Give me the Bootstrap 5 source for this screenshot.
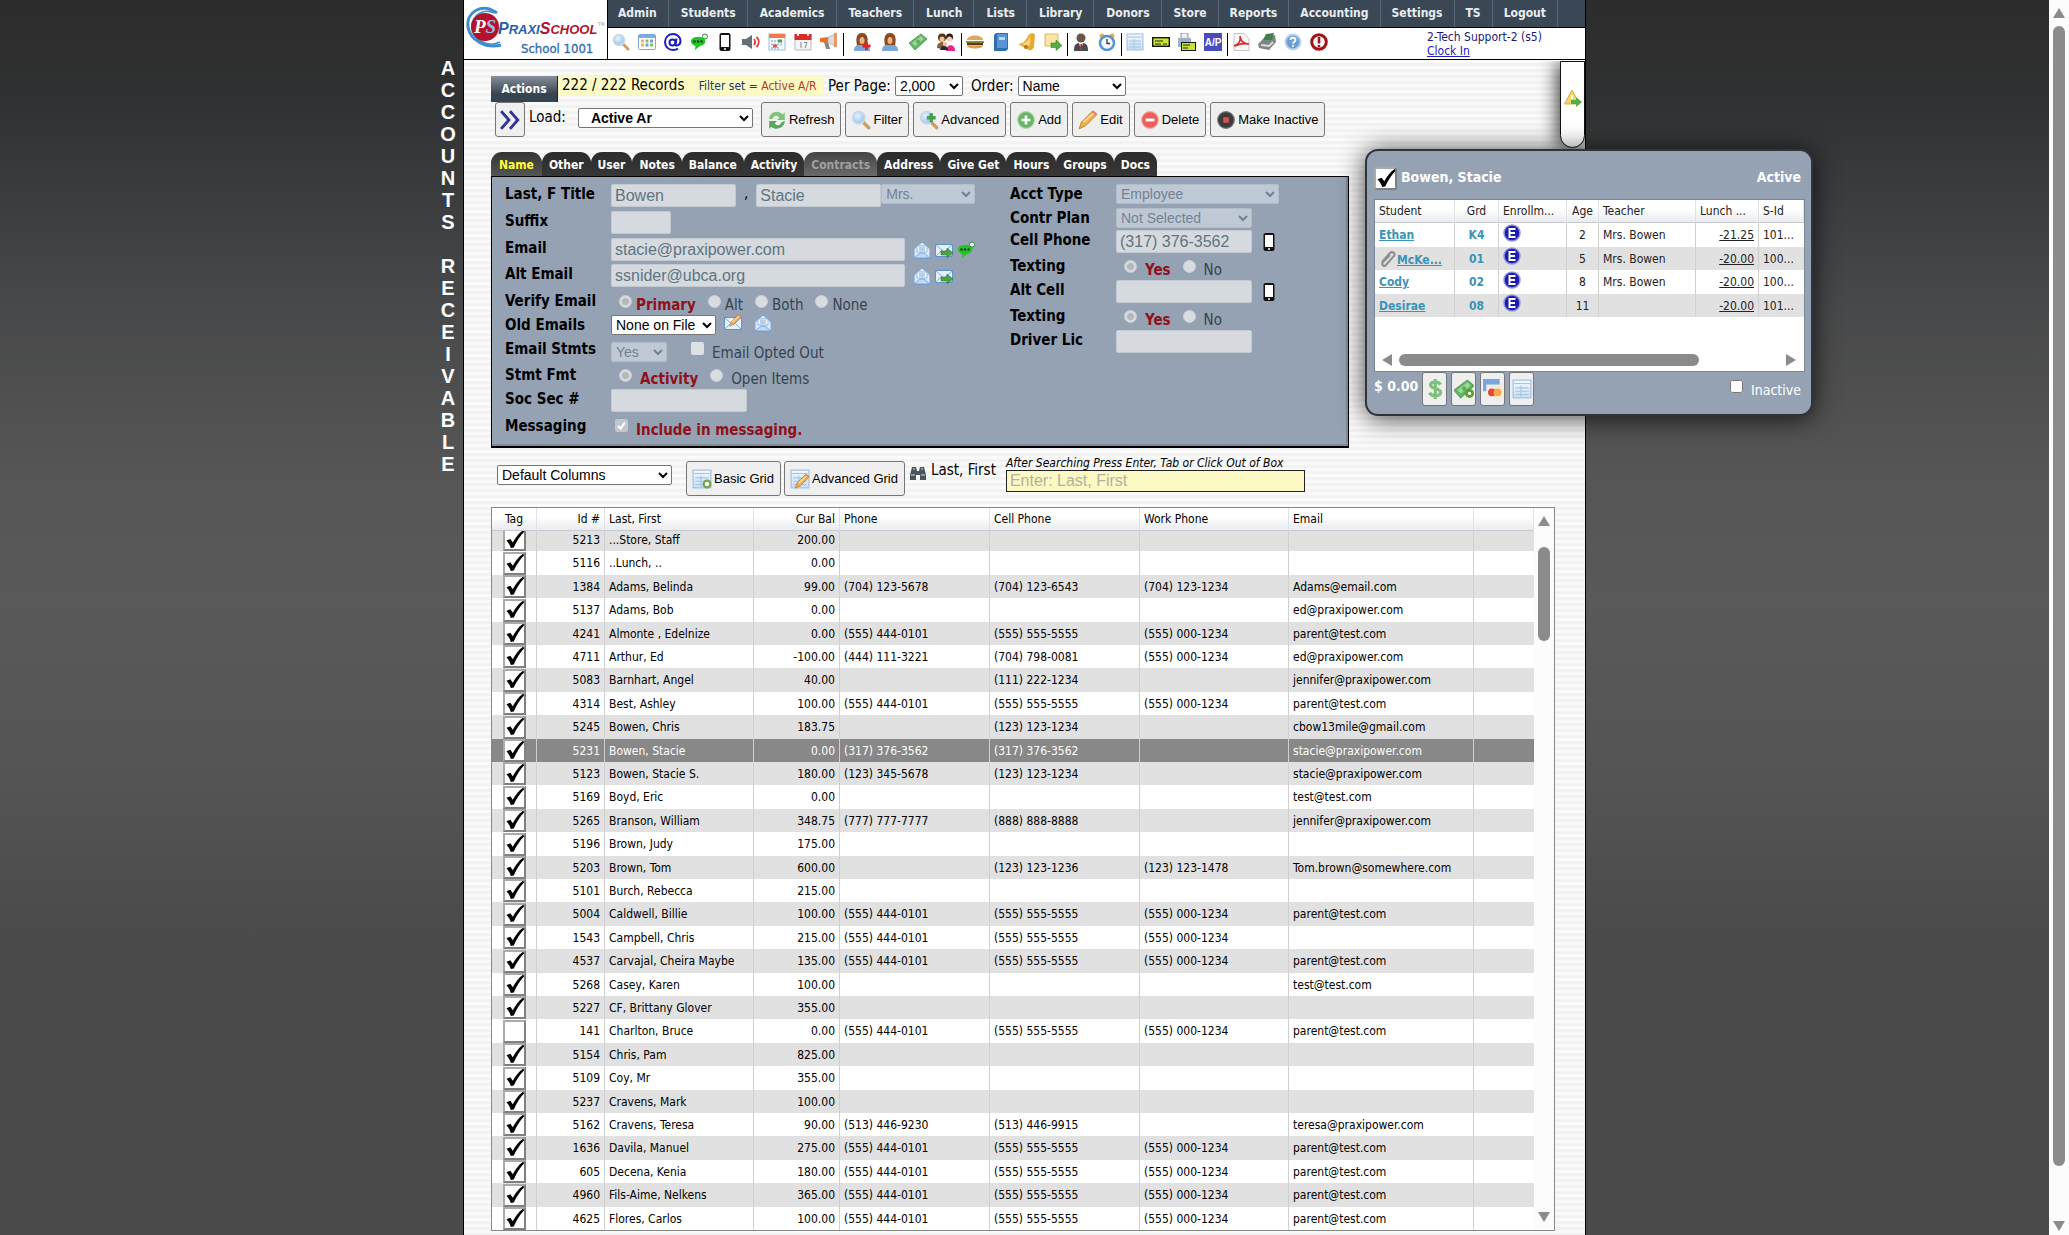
<!DOCTYPE html>
<html lang="en">
<head>
<meta charset="utf-8">
<meta name="viewport" content="width=device-width, initial-scale=1">
<title>PraxiSchool - Accounts Receivable</title>
<link href="https://cdn.jsdelivr.net/npm/bootstrap@5.3.0/dist/css/bootstrap.min.css" rel="stylesheet">
<style>
body{font-family:"DejaVu Sans Condensed","DejaVu Sans",sans-serif;font-size:15px;line-height:20px;color:#000;background:linear-gradient(#2c2c2c 0,#303132 100px,#474849 300px,#565656 480px,#595959 600px,#555 760px,#4b4b4b 930px,#4b4b4b 100%);}
.scene{display:grid;grid-template-columns:minmax(0,1fr) minmax(0,1123px) minmax(0,1fr)}
.side-title{font:bold 20px/22px "Liberation Sans",Arial,sans-serif;color:#fff;white-space:pre;text-align:center;padding:57px 6px 0 0;width:24px;margin-left:auto}
.sheet{border:solid #000;border-width:0 1px;background:#fff repeating-linear-gradient(#fafafa 0,#fafafa 3px,#f2f2f2 3px,#f2f2f2 6px);padding-bottom:1px}
.topbar{border-bottom:1px solid #000;background:#fff}
.brand{width:144px;border-right:1px solid #000;height:59px}
.menu{background:#3a4856;border-bottom:1px solid #000;height:28px}
.menu a{color:#e9edf0;font-weight:bold;font-size:12px;line-height:27px;padding:0 11px 0 12px;border-right:1px solid #5b6875;text-decoration:none}
.menu a:nth-child(n+10){padding-left:11px}
.menu a:first-child{padding-left:10px}
.tools{padding:5px 0 0}
.ic{width:18px;height:18px;flex:none;display:block}
.tools .ic{margin:0 4px}
.tools .wide .ic{margin:0 5px}
.tools .bar{width:1px;height:23px;background:#000;margin-left:1px}
.who{font-size:12px;line-height:14px;color:#1a1a78;width:158px;padding-top:2px}
.who a{color:#2020b8}
.work{padding:16px 0 0 27px}
.actions{width:67px;height:26px;border:0;border-right:1px solid #222;background:linear-gradient(#87909a,#36444f 70%);color:#fff;font-weight:bold;font-size:12px;padding:0}
.strip{background:#fbfac5;height:19px;width:266px;padding-left:4px;line-height:19px}
.strip small{font-size:12px;color:#203a5c;margin-left:10px}
.strip b{font-weight:400;color:#b0401c}
select.pick{font:14px "Liberation Sans",Arial,sans-serif;height:20px;border:1px solid #767676;border-radius:2px;background:#fff;color:#000;padding:0}
select.pick:disabled{background:#bfc9d5;border-color:#b2bdca;color:#728191;opacity:1}
.fl select.pick{margin-top:1px}
select.pick.filterset{margin:6px 8px 0 4px;padding-left:8px;font-weight:bold}
.push{font:13px/16px "Liberation Sans",Arial,sans-serif;color:#000;background:#efefef;border:1px solid #767676;border-radius:3px;height:35px;padding:0 6px 0 5px;display:flex;align-items:center;gap:2px}
.push .ic{width:20px;height:20px}
.tabs{height:24px;margin-top:15px}
.tabs a{background:linear-gradient(#2c2c2c,#373737);border-radius:11px 11px 0 0;color:#fff;font-weight:bold;font-size:12px;line-height:27px;height:24px;padding:0 7px;text-decoration:none}
.tabs a.on{color:#ff3;background:linear-gradient(#333,#555);padding:0 8px}
.tabs a.off{color:#a0a0a0;background:linear-gradient(#444,#6a6a6a)}
.panel{border:1px solid #000;box-shadow:inset -2px -2px 0 #7d8b9b;border-bottom-width:2px;background:#94a2b4;width:858px;max-width:100%;height:272px;padding:6px 0 0 13px}
.fl{display:flex;align-items:flex-start}
.r22{height:22px}.r24{height:24px}.r26{height:26px}.r27{height:27px}
.fl>.cap{width:106px;flex:none;font-weight:bold;line-height:22px;white-space:nowrap}
.lead-col{width:505px;flex:none}
.fld{font:16px/20px "Liberation Sans",Arial,sans-serif;background:#d6dade;color:#5d7481;border:1px solid #c3cad2;border-radius:2px;height:23px;padding:0 3px;margin-top:1px;opacity:1}
.w56{width:56px}.w60{width:60px}.w68{width:68px}.w94{width:94px}.w105{width:105px}.w108{width:108px}.w125{width:125px}.w136{width:136px}.w163{width:163px}.w175{width:175px}.w294{width:294px}
.dot{appearance:none;width:13px;height:13px;border-radius:50%;background:#d9dce0;border:1px solid #ccd2d8;margin:5px 0 0;flex:none}
.dot:checked{background:radial-gradient(circle,#b4b8bc 0,#b4b8bc 3px,#d6d9dd 4px)}
.tick{appearance:none;width:13px;height:13px;border-radius:2px;background:#dde0e4;margin:2px 0 0;flex:none}
.tick:checked{background:#c3c6ca url("data:image/svg+xml,%3Csvg xmlns='http://www.w3.org/2000/svg' viewBox='0 0 13 13'%3E%3Cpath d='M3 7l2.500 2.500L10 3.500' fill='none' stroke='%23fff' stroke-width='2'/%3E%3C/svg%3E")}
.opt{line-height:22px;margin-top:4px;color:#38424d}
.hot{color:#8f1119;font-weight:bold}
.finder{padding-top:8px}
.finder .w175{margin:9px 14px 0 6px}
.finder .pair{margin-top:5px;gap:3px}
.finder .look{padding-left:2px}
.search{background:#fdf9c4;border:1px solid #222;height:22px;width:299px;font:16px "Liberation Sans",Arial,sans-serif;padding:0 3px}
.search::placeholder{color:#b3b19a;opacity:1}
.hint{font-size:12px;font-style:italic;line-height:14px}
.listing{border:1px solid #888;background:#fff;margin-right:30px;margin-top:11px}
.gridtab{font-size:12px;line-height:16px;table-layout:fixed;width:100%;border-collapse:separate;border-spacing:0}
.gridtab th{font-weight:400;height:23px;padding:0 4px;background:linear-gradient(#fff 40%,#e9ebef);border-right:1px solid #e0e2e6;border-bottom:1px solid #c8cacf;white-space:nowrap;overflow:hidden;text-overflow:clip}
.gridtab td{height:23px;padding:0 4px;border-right:1px solid #d0d0d0;white-space:nowrap;overflow:hidden}
.gridtab td:last-child{border-right:0}
.gridtab tbody tr:nth-child(odd){background:#e1e1e1}
.roster tbody tr:nth-child(5n+2) td,.roster tbody tr:nth-child(5n+4) td{height:24px}
.roster tbody tr:first-child td{height:20px;line-height:14px;padding-bottom:3px}
.roster tbody tr:first-child .chk{height:20px;border-top:0;background-position:center -1px}
.roster tbody tr.sel{background:#888;color:#fff}
.chk{appearance:none;display:block;width:23px;height:23px;margin:0 auto;border:2px solid #aaa;border-right-color:#808080;border-bottom-color:#808080;background:#fff}
.chk:checked{background:#fff url("data:image/svg+xml,%3Csvg xmlns='http://www.w3.org/2000/svg' viewBox='0 0 20 20'%3E%3Cpath d='M2 10.500l4-1.500 2.500 3.500C11 8 14.500 3 19.500 0L20 2c-4 4-7.500 9-10.500 15.500L6.500 18C5.500 15 4 12.500 2 10.500z'/%3E%3C/svg%3E") center/20px 20px no-repeat border-box}
.vbar{width:20px;flex:none;background:#fcfcfc;display:flex;flex-direction:column;align-items:center}
.vbar i{display:block;width:12px;background:#8b8b8b;border-radius:6px}
.vbar .thumb{height:94px;margin-top:21px}
.vbar .down.far{margin:55px 0 4px}
.up,.down,.lt,.rt{width:0;height:0;border:solid transparent}
.up{border-width:0 6px 10px;border-bottom-color:#8b8b8b}
.down{border-width:10px 6px 0;border-top-color:#8b8b8b}
.lt{border-width:6px 10px 6px 0;border-right-color:#8b8b8b}
.rt{border-width:6px 0 6px 10px;border-left-color:#8b8b8b}
.pull{position:absolute;right:0;top:61px;width:25px;height:87px;background:#fff;border:1px solid #111;border-radius:0 0 13px 13px;box-shadow:-3px 2px 18px rgba(0,0,0,.75);display:flex;align-items:center;justify-content:center;padding-bottom:14px;clip-path:inset(0 0 -20px -40px)}
.float-card{position:absolute;left:901px;top:149px;width:448px;height:267px;background:#94a2b4;border:2px solid #2f343a;border-radius:13px;box-shadow:0 2px 26px rgba(0,0,0,.75);padding:16px 6px 0 7px;font-size:14px;color:#fff}
.float-card .head{height:32px}
.kids{background:#fff;border:1px solid #7a8896;color:#222;height:173px}
.kids .gridtab{width:429px}
.kids .gridtab tbody tr:nth-child(odd){background:#fff}
.kids .gridtab tbody tr:nth-child(even){background:#e1e1e1}
.kids .gridtab th{height:23px}
.kids .gridtab td{height:24px;text-overflow:ellipsis}
.kids .gridtab tbody tr:nth-child(even) td{height:23px}
.kids td a{color:#3a93b8;font-weight:bold}
.kids .gr{color:#3a93b8;font-weight:bold}
.kids .gridtab td a.bal{color:#222;font-weight:400}
.kids .gridtab .ic{width:18px;height:18px;margin-top:-5px}
.foot .push{width:25px;height:34px;padding:0;justify-content:center;margin-right:4px}
.hbar{display:flex;align-items:center;height:22px;padding:0 8px 0 7px}
.hbar i{height:12px;width:300px;border-radius:6px;background:#8b8b8b;margin-left:7px}
</style>
</head>
<body>
<svg width="0" height="0" class="position-absolute" aria-hidden="true"><defs>
<radialGradient id="gb" cx=".4" cy=".35"><stop offset="0" stop-color="#e4f3fe"/><stop offset="1" stop-color="#a9cff0"/></radialGradient>
<linearGradient id="pg" x2="0" y2="1"><stop offset="0" stop-color="#f2f8fe"/><stop offset="1" stop-color="#c9dff4"/></linearGradient>
<symbol id="mag" viewBox="0 0 18 18"><path d="M11 11l5 5" stroke="#d19b66" stroke-width="3" stroke-linecap="round"/><circle cx="7" cy="7" r="5.500" fill="url(#gb)" stroke="#c9d8e6" stroke-width="1.500"/></symbol>
<symbol id="magadd" viewBox="0 0 18 18"><use href="#mag"/><path d="M11 3v8M7 7h8" stroke="#45a04e" stroke-width="3"/></symbol>
<symbol id="appw" viewBox="0 0 18 18"><rect x=".5" y="1.500" width="17" height="15" rx="1" fill="#fff" stroke="#7ba8d6"/><path d="M1 3.500h16" stroke="#79aee4" stroke-width="3"/><path d="M3 8h3M3 12h3" stroke="#ecb561" stroke-width="3"/><path d="M7.500 8h3M12 12h3" stroke="#7fc067" stroke-width="3"/><path d="M12 8h3M7.500 12h3" stroke="#6b9fd8" stroke-width="3"/></symbol>
<symbol id="at" viewBox="0 0 18 18"><g fill="none" stroke="#1c1cc4" stroke-width="2"><circle cx="8.500" cy="9.500" r="3"/><path d="M12.500 5.500l-1 6c.3 2 5 1 5-3.500C16.500 4 13 1 9 1S1 4 1 9s4 8 8 8c2 0 4-.5 5-1.500"/></g></symbol>
<symbol id="chat" viewBox="0 0 18 18"><path d="M8 4c9-1 10 8 2 9l-5 4 .5-4C-1 11-1 4 8 4z" fill="#22c522"/><circle cx="15" cy="3.500" r="2.500" fill="#dfe" stroke="#3a8a3a"/><path d="M3.500 8.500h2M7 8.500h2M10.500 8.500h2" stroke="#123" stroke-width="2"/></symbol>
<symbol id="cell" viewBox="0 0 18 18"><rect x="3.500" width="11" height="18" rx="2" fill="#111"/><rect x="5" y="2" width="8" height="12" fill="#fff"/><circle cx="9" cy="16" r="1" fill="#fff"/></symbol>
<symbol id="spk" viewBox="0 0 18 18"><path d="M0 6h4l6-4v14l-6-4H0z" fill="#666f78"/><path d="M12 6c1.500 2 1.500 4 0 6M14.500 4c3 3 3 7 0 10" stroke="#e0393e" stroke-width="1.800" fill="none"/></symbol>
<symbol id="cal" viewBox="0 0 18 18"><rect x="1" y="1" width="16" height="16" fill="#f6fafe" stroke="#9dbcdc"/><path d="M1 3h16" stroke="#ef7a4e" stroke-width="4"/><path d="M3 8h12M3 11.500h12M3 15h9" stroke="#aac6e2" stroke-width="2" stroke-dasharray="2 1"/><path d="M10 8h4" stroke="#4aa33e" stroke-width="3"/><path d="M5 13h4" stroke="#e05545" stroke-width="3"/></symbol>
<symbol id="redcal" viewBox="0 0 18 18"><path d="M1 2h16v15H1z" fill="#f4f4f4" stroke="#bbb"/><path d="M.5 1h17v6H.5z" fill="#d92b2b"/><path d="M4 0v3M14 0v3" stroke="#eee" stroke-width="2"/><path d="M7 9v6M10 9.500h3l-2 5.500" stroke="#888" fill="none"/></symbol>
<symbol id="mega" viewBox="0 0 18 18"><path d="M4 9l4-1 2 8H6z" fill="#888"/><path d="M0 5l8-1v6l-8-1z" fill="#e8702a"/><path d="M8 4l7-3v12l-7-3z" fill="#d9dde0" stroke="#9a9a9a" stroke-width=".5"/><path d="M14 0h3v14h-3z" fill="#e79a6c"/></symbol>
<symbol id="woman" viewBox="0 0 18 18"><path d="M1 18c0-6 4-7 8-7s8 1 8 7z" fill="#7ba6da"/><path d="M4 12C2 3 5 0 9 0s7 3 5 12z" fill="#8d4a22"/><ellipse cx="9" cy="7.500" rx="2.500" ry="3.500" fill="#e8b588"/></symbol>
<symbol id="womanadd" viewBox="0 0 18 18"><use href="#woman"/><path d="M13.500 9v8M9.500 13h8" stroke="#e2231f" stroke-width="2.800"/></symbol>
<symbol id="cash" viewBox="0 0 18 18"><path d="M0 10L12 1l6 5L6 17z" fill="#63b462" stroke="#5aa45e"/><path d="M3 10l9-7 3 3-9 7z" fill="#9cd79a"/><circle cx="9" cy="8.500" r="2" fill="#5cad60"/></symbol>
<symbol id="people" viewBox="0 0 18 18"><circle cx="5" cy="4.500" r="4" fill="#523318"/><circle cx="12.500" cy="4" r="3.500" fill="#2c1a10"/><path d="M0 15c0-5 3-6 6-6l4 8z" fill="#8b5d3a"/><path d="M9 18c0-7 9-8 9 0z" fill="#e0288c"/><circle cx="5" cy="6" r="2.500" fill="#f2c49a"/><circle cx="12.500" cy="6" r="2.500" fill="#f6d0ad"/><path d="M3 17c1-5 7-6 8 0z" fill="#2a2a2a"/><circle cx="8" cy="11" r="2.200" fill="#efc09a"/></symbol>
<symbol id="burger" viewBox="0 0 18 18"><path d="M1 7c0-6 16-6 16 0z" fill="#e0a85a"/><path d="M0 9h18" stroke="#7f9a3c" stroke-width="2"/><path d="M1 11h16" stroke="#6a3518" stroke-width="2.500"/><path d="M1 12.500h16c0 4-16 4-16 0z" fill="#dc9f4c"/></symbol>
<symbol id="book" viewBox="0 0 18 18"><path d="M2 2l2-2h12v16l-2 2H2z" fill="#2f6fae"/><path d="M5 1h10v14H5z" fill="#5a97d2"/><path d="M7 4h6v3H7z" fill="#b9d6f0"/></symbol>
<symbol id="bell" viewBox="0 0 18 18"><path d="M15 0l2 2-1 11c0 3-3 5-5 4L0 11c4 0 8-3 10-8 1-2 3-3 5-3z" fill="#e8a92c"/><path d="M12 3c-1 4-5 7-8 8l6 3c2-2 3-6 2-11z" fill="#f8d678"/><circle cx="8" cy="14" r="2" fill="#b87416"/></symbol>
<symbol id="note" viewBox="0 0 18 18"><path d="M1 1h13v12H1z" fill="#fbe5a4" stroke="#e2b765"/><path d="M7 10h5V7l6 5.500-6 5V14.500H7z" fill="#4fae3f" stroke="#338a2b" stroke-width=".6"/></symbol>
<symbol id="suit" viewBox="0 0 18 18"><path d="M2 18c0-7 2-8 7-8s7 1 7 8z" fill="#454b52"/><circle cx="9" cy="5" r="4.500" fill="#6a5548"/><path d="M7 10h4l-2 7z" fill="#fff"/><path d="M8.500 11h1.500l.5 4-1.500 2-1-2z" fill="#cc2027"/></symbol>
<symbol id="clock" viewBox="0 0 18 18"><circle cx="4" cy="3" r="2.500" fill="#e8b04a"/><circle cx="14" cy="3" r="2.500" fill="#e8b04a"/><circle cx="9" cy="10" r="7" fill="#f4f9ff" stroke="#5193d2" stroke-width="2.500"/><path d="M9 6v4.500h3" stroke="#333" fill="none" stroke-width="1.300"/></symbol>
<symbol id="sheet" viewBox="0 0 18 18"><rect x="1" y="1" width="16" height="16" fill="url(#pg)" stroke="#9cbfe2"/><path d="M2 4h14M3 8h12M3 11h12M3 14h12M8 6v10" stroke="#a5c5e5" stroke-width="1"/></symbol>
<symbol id="sheetadd" viewBox="0 0 18 18"><use href="#sheet"/><circle cx="13.500" cy="13.500" r="3" fill="#fff" stroke="#6fa54b" stroke-width="2"/></symbol>
<symbol id="pencil" viewBox="0 0 18 18"><path d="M1 17l2-6L13 1l4 3L7 14z" fill="#f2b04c" stroke="#b97a28" stroke-width=".8"/><path d="M12 2l2-1.500 3.500 3L16 5z" fill="#e4836f"/><path d="M5 11l9-8" stroke="#fbdc96" stroke-width="1.500"/></symbol>
<symbol id="sheetedit" viewBox="0 0 18 18"><use href="#sheet"/><use href="#pencil" x="4" y="4" width="14" height="14"/></symbol>
<symbol id="cheque" viewBox="0 0 18 18"><rect x=".7" y="4.700" width="16.600" height="8.600" fill="#c5e733" stroke="#151515" stroke-width="1.400"/><path d="M3 8h8M3 11h6M11 11h4" stroke="#222"/></symbol>
<symbol id="chequep" viewBox="0 0 18 18"><path d="M3 0h7v6H3z" fill="#e8eef4" stroke="#8b98a6"/><path d="M0 5h13v9H0z" fill="#9fb2c4"/><rect x="3.500" y="9.500" width="14" height="8" fill="#c5e733" stroke="#151515"/><path d="M5 12h7M5 15h5" stroke="#222"/></symbol>
<symbol id="apx" viewBox="0 0 18 18"><rect width="18" height="18" fill="#4b4bc0"/><text x="9" y="13" text-anchor="middle" font-size="10" font-weight="bold" fill="#fff" font-family="Liberation Sans,sans-serif">A/P</text></symbol>
<symbol id="pdf" viewBox="0 0 18 18"><path d="M2 .5h10l5 5v12H2z" fill="#f8f8f8" stroke="#c4c4c4"/><path d="M2 13c5-2 7-6 6-10M8 4c1 4 4 7 9 7M3 13c4-2 8-3 13-2" stroke="#d8282c" stroke-width="1.600" fill="none"/></symbol>
<symbol id="prn" viewBox="0 0 18 18"><path d="M0 11l6-6 11-3 1 7-7 8-10-2z" fill="#7d8580"/><path d="M5 7l3-6 8-1-2 7z" fill="#3f7f50"/><path d="M3 12l8 1 4-4" stroke="#dadfdc" stroke-width="1.800" fill="none"/></symbol>
<symbol id="help" viewBox="0 0 18 18"><circle cx="9" cy="9" r="7.500" fill="#6b9fd6" stroke="#bcd3ea" stroke-width="2"/><path d="M6.500 7c0-3 5-3 5 0 0 2-2.500 2-2.500 3.500M9 12v1.800" stroke="#fff" stroke-width="1.800" fill="none"/></symbol>
<symbol id="stop" viewBox="0 0 18 18"><circle cx="9" cy="9" r="7.300" fill="#fff" stroke="#a31216" stroke-width="3"/><path d="M9 4v6.500M9 12v2.200" stroke="#a31216" stroke-width="2.600"/></symbol>
<symbol id="warn" viewBox="0 0 18 18"><path d="M8 1l7.500 14H.5z" fill="#f8d458" stroke="#c9b064"/><path d="M8 6v4" stroke="#fff" stroke-width="2"/><path d="M7 11h5V8l6 5-6 5v-3H7z" fill="#55ad43"/></symbol>
<symbol id="chev" viewBox="0 0 18 18"><path d="M1 1l7 8-7 8M9 1l7 8-7 8" fill="none" stroke="#33339c" stroke-width="2.600"/></symbol>
<symbol id="refr" viewBox="0 0 18 18"><path d="M2 8c0-6 8-9 12-4l2-2v7H9l2-2c-2-3-5-2-6 1z" fill="#7cc476"/><path d="M16 10c0 6-8 9-12 5l-2 2v-7h7l-2 2c2 3 5 2 6-1z" fill="#5aa75b"/></symbol>
<symbol id="plus" viewBox="0 0 18 18"><circle cx="9" cy="9" r="7.500" fill="#67b565" stroke="#a8d6a4"/><path d="M9 5v8M5 9h8" stroke="#fff" stroke-width="2.400"/></symbol>
<symbol id="minus" viewBox="0 0 18 18"><circle cx="9" cy="9" r="7.500" fill="#ea5f5c" stroke="#f3a09c"/><path d="M5 9h8" stroke="#fff" stroke-width="2.600"/></symbol>
<symbol id="blk" viewBox="0 0 18 18"><circle cx="9" cy="9" r="7.500" fill="#3c3c3e" stroke="#77787a"/><path d="M6.500 6.500h5v5h-5z" fill="#e05050"/></symbol>
<symbol id="mailo" viewBox="0 0 18 18"><path d="M1 8l8-7 8 7v9H1z" fill="#dcebfb" stroke="#7aa6da"/><path d="M4 5h10v6H4z" fill="#fff" stroke="#8db5e2"/><path d="M6 7h6M6 9h6" stroke="#6fa0da"/><path d="M1 17l6-5h4l6 5z" fill="#bcd9f6" stroke="#5d93d0" stroke-width=".7"/></symbol>
<symbol id="mail" viewBox="0 0 18 18"><path d="M.5 3.500h17v12H.5z" fill="#e6f1fd" stroke="#5d93d0"/><path d="M1 4l8 7 8-7M1 15l6-6M17 15l-6-6" fill="none" stroke="#7fadde"/></symbol>
<symbol id="mails" viewBox="0 0 18 18"><use href="#mail"/><path d="M6 10h6V7l6 5-6 5v-3H6z" fill="#4fa33e" stroke="#2f7d28" stroke-width=".6"/></symbol>
<symbol id="maile" viewBox="0 0 18 18"><use href="#mail"/><use href="#pencil" x="5" width="13" height="13"/></symbol>
<symbol id="bino" viewBox="0 0 18 18"><path d="M3 3h4l1 4h2l1-4h4l2 8v5h-6v-5H7v5H1v-5z" fill="#4b535c"/><path d="M2 11h4M12 11h4M4 5h2M12 5h2" stroke="#a5b0bb" stroke-width="1.500"/></symbol>
<symbol id="enr" viewBox="0 0 18 18"><circle cx="9" cy="9" r="8" fill="#1c1cb0" stroke="#8f93d8" stroke-width="1.500"/><path d="M12.500 5H6.500v8h6M7 9h5" stroke="#fff" stroke-width="2" fill="none"/></symbol>
<symbol id="clip" viewBox="0 0 18 18"><path d="M3 12L11 3c2-2 6 0 4 3l-8 9c-2 2-5 0-3-3l7-7" fill="none" stroke="#8c8c8c" stroke-width="2"/></symbol>
<symbol id="dol" viewBox="0 0 18 18"><path d="M14 5c-2-3-9-3-9 .5 0 4 9 2 9 6.500 0 4-8 4-10 .5M9.300 0v18" stroke="#7cc07c" stroke-width="2.800" fill="none"/></symbol>
<symbol id="cashadd" viewBox="0 0 18 18"><use href="#cash"/><circle cx="14" cy="13" r="4" fill="#57a02d"/><circle cx="14" cy="13" r="1.500" fill="#fff"/></symbol>
<symbol id="cards" viewBox="0 0 18 18"><path d="M0 0h15v11H0z" fill="#7ba5e2"/><path d="M3 5h15v12H3z" fill="#f4ecd9"/><circle cx="8" cy="12" r="3.500" fill="#e3453f"/><circle cx="13" cy="12" r="3.500" fill="#f5ab46"/></symbol>
</defs></svg>

<div class="d-flex min-vh-100">
<div class="scene flex-grow-1 overflow-hidden">
<aside><div class="side-title">A
C
C
O
U
N
T
S

R
E
C
E
I
V
A
B
L
E</div></aside>
<main class="sheet position-relative">
  <header class="topbar d-flex">
    <div class="brand flex-shrink-0">
      <svg width="142" height="59" viewBox="0 0 142 59" role="img" aria-label="PraxiSchool School 1001">
        <g fill="none" stroke="#3f8fd0"><path d="M33 13C18 2 2 12 4 27c2 13 18 22 33 18" stroke-width="3"/><path d="M36 42C24 48 8 40 8 26 8 15 20 8 30 13" stroke-width="1.500"/></g>
        <circle cx="21" cy="27" r="14" fill="#b3122c"/>
        <text x="10" y="33" font-family="Liberation Serif,serif" font-weight="bold" font-style="italic" font-size="19" fill="#fff">P<tspan fill="#9fb9ea">S</tspan></text>
        <text x="34" y="34" font-family="Liberation Sans,sans-serif" font-weight="bold" font-style="italic" font-size="16" fill="#1f5fae">P<tspan font-size="13">RAXI</tspan><tspan fill="#b3122c">S</tspan><tspan fill="#b3122c" font-size="13">CHOOL</tspan></text>
        <text x="134" y="26" font-size="5" fill="#999">TM</text>
        <text x="57" y="53" font-family="DejaVu Sans Condensed,sans-serif" font-size="13" fill="#2f6cab" stroke="#2f6cab" stroke-width=".3">School 1001</text>
      </svg>
    </div>
    <div class="flex-grow-1">
      <nav class="menu d-flex"><a href="#">Admin</a><a href="#">Students</a><a href="#">Academics</a><a href="#">Teachers</a><a href="#">Lunch</a><a href="#">Lists</a><a href="#">Library</a><a href="#">Donors</a><a href="#">Store</a><a href="#">Reports</a><a href="#">Accounting</a><a href="#">Settings</a><a href="#">TS</a><a href="#">Logout</a></nav>
      <div class="d-flex justify-content-between">
        <div class="tools d-flex">
          <svg class="ic"><use href="#mag"/></svg><svg class="ic"><use href="#appw"/></svg><svg class="ic"><use href="#at"/></svg><svg class="ic"><use href="#chat"/></svg><svg class="ic"><use href="#cell"/></svg><svg class="ic"><use href="#spk"/></svg><svg class="ic"><use href="#cal"/></svg><svg class="ic"><use href="#redcal"/></svg><svg class="ic"><use href="#mega"/></svg>
          <span class="bar"></span>
          <span class="wide d-flex ms-1"><svg class="ic"><use href="#womanadd"/></svg><svg class="ic"><use href="#woman"/></svg><svg class="ic"><use href="#cash"/></svg><svg class="ic"><use href="#people"/></svg></span>
          <span class="bar"></span>
          <svg class="ic"><use href="#burger"/></svg><svg class="ic"><use href="#book"/></svg><svg class="ic"><use href="#bell"/></svg><svg class="ic"><use href="#note"/></svg>
          <span class="bar"></span>
          <svg class="ic"><use href="#suit"/></svg><svg class="ic"><use href="#clock"/></svg>
          <span class="bar"></span>
          <svg class="ic"><use href="#sheet"/></svg><svg class="ic"><use href="#cheque"/></svg><svg class="ic"><use href="#chequep"/></svg><svg class="ic"><use href="#apx"/></svg>
          <span class="bar"></span>
          <svg class="ic"><use href="#pdf"/></svg><svg class="ic"><use href="#prn"/></svg><svg class="ic"><use href="#help"/></svg><svg class="ic"><use href="#stop"/></svg>
        </div>
        <div class="who">2-Tech Support-2 (s5)<br><a href="#">Clock In</a></div>
      </div>
    </div>
  </header>

  <div class="work">
    <div class="d-flex align-items-start">
      <button class="actions" type="button">Actions</button>
      <div class="strip text-nowrap">222 / 222 Records <small>Filter set = <b>Active A/R</b></small></div>
      <label for="pp" class="ms-1 me-1">Per Page:</label><select id="pp" class="pick w68"><option>2,000</option></select>
      <label for="ord" class="ms-2 me-1">Order:</label><select id="ord" class="pick w108"><option>Name</option></select>
    </div>
    <div class="d-flex align-items-start">
      <button class="push ms-1 me-1 px-1" type="button" aria-label="Expand"><svg class="ic"><use href="#chev"/></svg></button>
      <label for="ld" class="mt-1 me-2 lh-1 pt-1">Load:</label><select id="ld" class="pick w175 filterset"><option>Active Ar</option></select>
      <div class="d-flex gap-1">
        <button class="push" type="button"><svg class="ic"><use href="#refr"/></svg>Refresh</button>
        <button class="push" type="button"><svg class="ic"><use href="#mag"/></svg>Filter</button>
        <button class="push" type="button"><svg class="ic"><use href="#magadd"/></svg>Advanced</button>
        <button class="push" type="button"><svg class="ic"><use href="#plus"/></svg>Add</button>
        <button class="push" type="button"><svg class="ic"><use href="#pencil"/></svg>Edit</button>
        <button class="push" type="button"><svg class="ic"><use href="#minus"/></svg>Delete</button>
        <button class="push" type="button"><svg class="ic"><use href="#blk"/></svg>Make Inactive</button>
      </div>
    </div>
    <nav class="tabs d-flex"><a href="#" class="on">Name</a><a href="#">Other</a><a href="#">User</a><a href="#">Notes</a><a href="#">Balance</a><a href="#">Activity</a><a href="#" class="off">Contracts</a><a href="#">Address</a><a href="#">Give Get</a><a href="#">Hours</a><a href="#">Groups</a><a href="#">Docs</a></nav>

    <form class="panel d-flex">
      <div class="lead-col">
        <div class="fl r27"><label class="cap" for="ln">Last, F Title</label><input id="ln" class="fld w125" value="Bowen" disabled><span class="px-2">,</span><input class="fld w125" aria-label="First name" value="Stacie" disabled><select class="pick w94" aria-label="Title" disabled><option>Mrs.</option></select></div>
        <div class="fl r27"><label class="cap" for="sf">Suffix</label><input id="sf" class="fld w60" disabled></div>
        <div class="fl r26"><label class="cap" for="em">Email</label><input id="em" class="fld w294" value="stacie@praxipower.com" disabled><span class="d-flex gap-1 ms-2 mt-1"><svg class="ic"><use href="#mailo"/></svg><svg class="ic"><use href="#mails"/></svg><svg class="ic"><use href="#chat"/></svg></span></div>
        <div class="fl r27"><label class="cap" for="ae">Alt Email</label><input id="ae" class="fld w294" value="ssnider@ubca.org" disabled><span class="d-flex gap-1 ms-2 mt-1"><svg class="ic"><use href="#mailo"/></svg><svg class="ic"><use href="#mails"/></svg></span></div>
        <div class="fl r24"><span class="cap">Verify Email</span><input type="radio" class="dot ms-2" id="v1" name="v" checked disabled><label for="v1" class="opt hot ms-1 me-2">Primary</label><input type="radio" class="dot ms-1" id="v2" name="v" disabled><label for="v2" class="opt ms-1 me-2">Alt</label><input type="radio" class="dot ms-1" id="v3" name="v" disabled><label for="v3" class="opt ms-1 me-2">Both</label><input type="radio" class="dot ms-1" id="v4" name="v" disabled><label for="v4" class="opt ms-1">None</label></div>
        <div class="fl r24"><label class="cap" for="oe">Old Emails</label><select id="oe" class="pick w105"><option>None on File</option></select><svg class="ic ms-2 me-1"><use href="#maile"/></svg><svg class="ic ms-2"><use href="#mailo"/></svg></div>
        <div class="fl r26"><label class="cap" for="es">Email Stmts</label><select id="es" class="pick w56 mt-1" disabled><option>Yes</option></select><input type="checkbox" class="tick ms-4 mt-1" id="oo" disabled><label for="oo" class="opt ms-2">Email Opted Out</label></div>
        <div class="fl r24"><span class="cap">Stmt Fmt</span><input type="radio" class="dot ms-2" id="s1" name="s" checked disabled><label for="s1" class="opt hot ms-2 me-2">Activity</label><input type="radio" class="dot ms-1" id="s2" name="s" disabled><label for="s2" class="opt ms-2">Open Items</label></div>
        <div class="fl r27"><label class="cap" for="ss">Soc Sec #</label><input id="ss" class="fld w136" disabled></div>
        <div class="fl r26"><span class="cap">Messaging</span><input type="checkbox" class="tick ms-1 mt-1" id="ms" checked disabled><label for="ms" class="opt hot ms-2">Include in messaging.</label></div>
      </div>
      <div>
        <div class="fl r24"><label class="cap" for="at1">Acct Type</label><select id="at1" class="pick w163" disabled><option>Employee</option></select></div>
        <div class="fl r22"><label class="cap" for="cp">Contr Plan</label><select id="cp" class="pick w136" disabled><option>Not Selected</option></select></div>
        <div class="fl r26"><label class="cap" for="ph">Cell Phone</label><input id="ph" class="fld w136" value="(317) 376-3562" disabled><svg class="ic ms-2 mt-1"><use href="#cell"/></svg></div>
        <div class="fl r24"><span class="cap">Texting</span><input type="radio" class="dot ms-2" id="t1" name="t" checked disabled><label for="t1" class="opt hot ms-2 me-2">Yes</label><input type="radio" class="dot ms-1" id="t2" name="t" disabled><label for="t2" class="opt ms-2">No</label></div>
        <div class="fl r26"><label class="cap" for="ac">Alt Cell</label><input id="ac" class="fld w136" disabled><svg class="ic ms-2 mt-1"><use href="#cell"/></svg></div>
        <div class="fl r24"><span class="cap">Texting</span><input type="radio" class="dot ms-2" id="u1" name="u" checked disabled><label for="u1" class="opt hot ms-2 me-2">Yes</label><input type="radio" class="dot ms-1" id="u2" name="u" disabled><label for="u2" class="opt ms-2">No</label></div>
        <div class="fl r26"><label class="cap" for="dl">Driver Lic</label><input id="dl" class="fld w136" disabled></div>
      </div>
    </form>

    <div class="finder d-flex align-items-start">
      <select class="pick w175" aria-label="Columns"><option>Default Columns</option></select>
      <div class="pair d-flex"><button class="push" type="button"><svg class="ic"><use href="#sheetadd"/></svg>Basic Grid</button><button class="push" type="button"><svg class="ic"><use href="#sheetedit"/></svg>Advanced Grid</button></div>
      <svg class="ic ms-1 mt-2"><use href="#bino"/></svg><label for="q" class="ms-1 me-2 mt-1 pb-3">Last, First</label>
      <div class="look"><div class="hint text-nowrap">After Searching Press Enter, Tab or Click Out of Box</div><input id="q" class="search d-block" placeholder="Enter: Last, First"></div>
    </div>

    <div class="listing d-flex">
      <div class="flex-grow-1">
        <table class="gridtab roster">
          <colgroup><col style="width:45px"><col style="width:68px"><col style="width:149px"><col style="width:86px"><col style="width:150px"><col style="width:150px"><col style="width:149px"><col style="width:185px"><col></colgroup>
          <thead><tr><th class="text-center">Tag</th><th class="text-end">Id #</th><th>Last, First</th><th class="text-end">Cur Bal</th><th>Phone</th><th>Cell Phone</th><th>Work Phone</th><th>Email</th><th></th></tr></thead>
          <tbody id="rows"></tbody>
        </table>
      </div>
      <div class="vbar"><span class="up mt-2"></span><i class="thumb"></i><span class="down mt-auto mb-2"></span></div>
    </div>
  </div>

  <div class="pull"><svg class="ic"><use href="#warn"/></svg></div>

  <section class="float-card">
    <div class="head d-flex align-items-start fw-bold"><input type="checkbox" class="chk m-0 me-1" aria-label="Tag account" checked><span class="flex-grow-1">Bowen, Stacie</span><span class="me-1">Active</span></div>
    <div class="kids">
      <table class="gridtab">
        <colgroup><col style="width:80px"><col style="width:44px"><col style="width:68px"><col style="width:32px"><col style="width:97px"><col style="width:63px"><col></colgroup>
        <thead><tr><th>Student</th><th class="text-center">Grd</th><th>Enrollm...</th><th class="text-center">Age</th><th>Teacher</th><th>Lunch ...</th><th>S-Id</th></tr></thead>
        <tbody>
          <tr><td><a href="#">Ethan</a></td><td class="text-center gr">K4</td><td><svg class="ic"><use href="#enr"/></svg></td><td class="text-center">2</td><td>Mrs. Bowen</td><td class="text-end"><a href="#" class="bal">-21.25</a></td><td>101...</td></tr>
          <tr><td><div class="d-flex align-items-end"><svg class="ic mt-0"><use href="#clip"/></svg><a href="#">McKe...</a></div></td><td class="text-center gr">01</td><td><svg class="ic"><use href="#enr"/></svg></td><td class="text-center">5</td><td>Mrs. Bowen</td><td class="text-end"><a href="#" class="bal">-20.00</a></td><td>100...</td></tr>
          <tr><td><a href="#">Cody</a></td><td class="text-center gr">02</td><td><svg class="ic"><use href="#enr"/></svg></td><td class="text-center">8</td><td>Mrs. Bowen</td><td class="text-end"><a href="#" class="bal">-20.00</a></td><td>100...</td></tr>
          <tr><td><a href="#">Desirae</a></td><td class="text-center gr">08</td><td><svg class="ic"><use href="#enr"/></svg></td><td class="text-center">11</td><td></td><td class="text-end"><a href="#" class="bal">-20.00</a></td><td>101...</td></tr>
        </tbody>
      </table>
      <div class="hbar mt-4 pt-3"><span class="lt"></span><i></i><span class="rt ms-auto"></span></div>
    </div>
    <div class="d-flex foot align-items-start">
      <b class="mt-1 me-1">$ 0.00</b>
      <button class="push" type="button" aria-label="Payment"><svg class="ic"><use href="#dol"/></svg></button>
      <button class="push" type="button" aria-label="Add cash"><svg class="ic"><use href="#cashadd"/></svg></button>
      <button class="push" type="button" aria-label="Cards"><svg class="ic"><use href="#cards"/></svg></button>
      <button class="push" type="button" aria-label="Ledger"><svg class="ic"><use href="#sheet"/></svg></button>
      <input type="checkbox" class="ms-auto mt-2" id="ina"><label for="ina" class="mt-2 ms-2 me-1">Inactive</label>
    </div>
  </section>
</main>
<div></div>
</div>
<div class="vbar"><span class="up mt-1 pt-1"></span><i class="mt-2 flex-grow-1"></i><span class="down far"></span></div>
</div>

<script>
const P='(555) 444-0101',C='(555) 555-5555',W='(555) 000-1234',E='parent@test.com';
const rows=[
[5213,'...Store, Staff','200.00'],[5116,'..Lunch, ..','0.00'],
[1384,'Adams, Belinda','99.00','(704) 123-5678','(704) 123-6543','(704) 123-1234','Adams@email.com'],
[5137,'Adams, Bob','0.00','','','','ed@praxipower.com'],
[4241,'Almonte , Edelnize','0.00',P,C,W,E],
[4711,'Arthur, Ed','-100.00','(444) 111-3221','(704) 798-0081',W,'ed@praxipower.com'],
[5083,'Barnhart, Angel','40.00','','(111) 222-1234','','jennifer@praxipower.com'],
[4314,'Best, Ashley','100.00',P,C,W,E],
[5245,'Bowen, Chris','183.75','','(123) 123-1234','','cbow13mile@gmail.com'],
[5231,'Bowen, Stacie','0.00','(317) 376-3562','(317) 376-3562','','stacie@praxipower.com'],
[5123,'Bowen, Stacie S.','180.00','(123) 345-5678','(123) 123-1234','','stacie@praxipower.com'],
[5169,'Boyd, Eric','0.00','','','','test@test.com'],
[5265,'Branson, William','348.75','(777) 777-7777','(888) 888-8888','','jennifer@praxipower.com'],
[5196,'Brown, Judy','175.00'],
[5203,'Brown, Tom','600.00','','(123) 123-1236','(123) 123-1478','Tom.brown@somewhere.com'],
[5101,'Burch, Rebecca','215.00'],
[5004,'Caldwell, Billie','100.00',P,C,W,E],
[1543,'Campbell, Chris','215.00',P,C,W],
[4537,'Carvajal, Cheira Maybe','135.00',P,C,W,E],
[5268,'Casey, Karen','100.00','','','','test@test.com'],
[5227,'CF, Brittany Glover','355.00'],
[141,'Charlton, Bruce','0.00',P,C,W,E],
[5154,'Chris, Pam','825.00'],[5109,'Coy, Mr','355.00'],[5237,'Cravens, Mark','100.00'],
[5162,'Cravens, Teresa','90.00','(513) 446-9230','(513) 446-9915','','teresa@praxipower.com'],
[1636,'Davila, Manuel','275.00',P,C,W,E],
[605,'Decena, Kenia','180.00',P,C,W,E],
[4960,'Fils-Aime, Nelkens','365.00',P,C,W,E],
[4625,'Flores, Carlos','100.00',P,C,W,E]];
document.getElementById('rows').innerHTML=rows.map(r=>{
  const c=i=>r[i]||'';
  return `<tr class="${r[0]===5231?'sel':''}"><td class="p-0"><input type="checkbox" class="chk" aria-label="Tag ${r[1]}" ${r[0]===141?'':'checked'}></td><td class="text-end">${r[0]}</td><td>${r[1]}</td><td class="text-end">${r[2]}</td><td>${c(3)}</td><td>${c(4)}</td><td>${c(5)}</td><td>${c(6)}</td><td></td></tr>`;
}).join('');
</script>
<script src="https://cdn.jsdelivr.net/npm/bootstrap@5.3.0/dist/js/bootstrap.bundle.min.js"></script>
</body>
</html>
